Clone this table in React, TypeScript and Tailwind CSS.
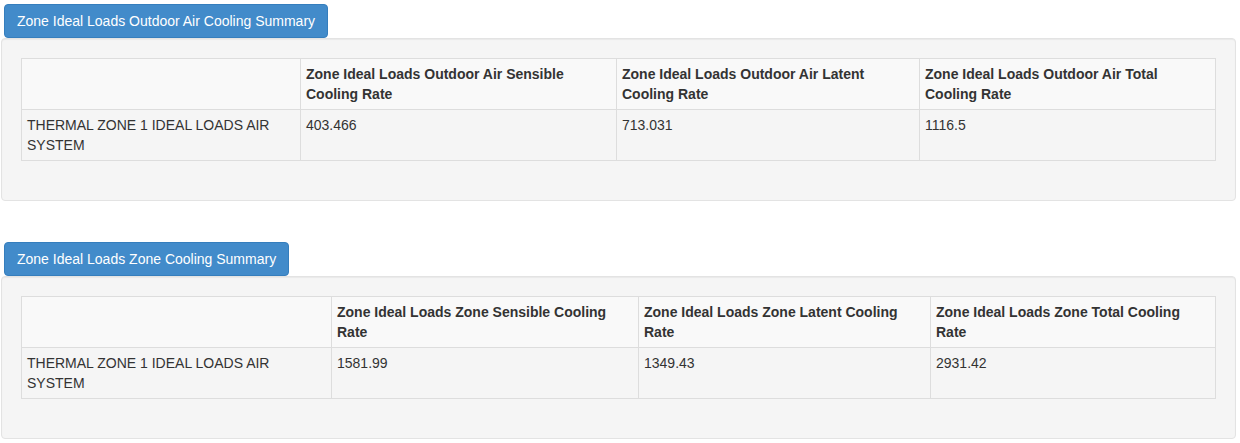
import React from "react";

interface Summary {
  title: string;
  headers: string[];
  widths: number[];
  rows: string[][];
}

const summaries: Summary[] = [
  {
    title: "Zone Ideal Loads Outdoor Air Cooling Summary",
    headers: [
      "",
      "Zone Ideal Loads Outdoor Air Sensible Cooling Rate",
      "Zone Ideal Loads Outdoor Air Latent Cooling Rate",
      "Zone Ideal Loads Outdoor Air Total Cooling Rate",
    ],
    widths: [279, 316, 303, 296],
    rows: [["THERMAL ZONE 1 IDEAL LOADS AIR SYSTEM", "403.466", "713.031", "1116.5"]],
  },
  {
    title: "Zone Ideal Loads Zone Cooling Summary",
    headers: [
      "",
      "Zone Ideal Loads Zone Sensible Cooling Rate",
      "Zone Ideal Loads Zone Latent Cooling Rate",
      "Zone Ideal Loads Zone Total Cooling Rate",
    ],
    widths: [310, 307, 292, 285],
    rows: [["THERMAL ZONE 1 IDEAL LOADS AIR SYSTEM", "1581.99", "1349.43", "2931.42"]],
  },
];

const SummaryBlock = ({ summary }: { summary: Summary }) => (
  <div className="flex flex-col items-start mb-[37px]">
    <button className="ml-[4px] mt-[4px] h-[34px] px-[12px] bg-[#428bca] border border-[#357ebd] rounded-[4px] text-white text-[14px] leading-[20px]">
      {summary.title}
    </button>
    <div className="w-[1235px] ml-[1px] bg-[#f5f5f5] border border-[#e3e3e3] rounded-[4px] p-[19px] shadow-[inset_0_1px_1px_rgba(0,0,0,0.05)]">
      <table className="w-[1194px] mb-[20px] border-collapse border border-[#dddddd] table-fixed">
        <colgroup>
          {summary.widths.map((w, i) => (
            <col key={i} style={{ width: w }} />
          ))}
        </colgroup>
        <thead>
          <tr className="bg-[#f9f9f9]">
            {summary.headers.map((h, i) => (
              <th
                key={i}
                className="border border-[#dddddd] px-[5px] py-[5px] text-left align-top font-bold text-[14px] leading-[20px] text-[#333333]"
              >
                {h}
              </th>
            ))}
          </tr>
        </thead>
        <tbody>
          {summary.rows.map((row, r) => (
            <tr key={r}>
              {row.map((cell, i) => (
                <td
                  key={i}
                  className="border border-[#dddddd] px-[5px] py-[5px] align-top text-[14px] leading-[20px] text-[#333333]"
                >
                  {cell}
                </td>
              ))}
            </tr>
          ))}
        </tbody>
      </table>
    </div>
  </div>
);

export default function App() {
  return (
    <div className="bg-white min-h-[443px] font-['Liberation_Sans',Arial,sans-serif]">
      {summaries.map((s) => (
        <SummaryBlock key={s.title} summary={s} />
      ))}
    </div>
  );
}
